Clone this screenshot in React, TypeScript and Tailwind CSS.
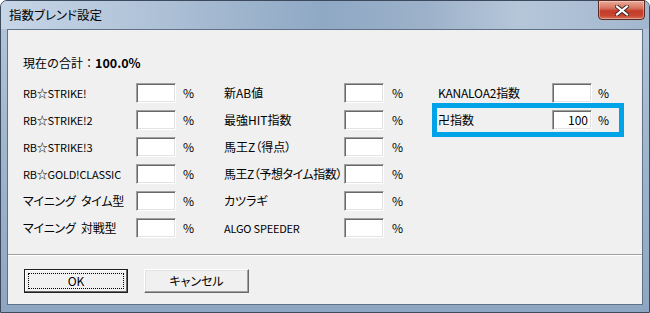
import React from 'react';

type Row = { label: string; value?: string; cls?: string };

const latin = 'text-[11px] tracking-[-0.2px]';

const col1: Row[] = [
  { label: 'RB☆STRIKE!', cls: latin },
  { label: 'RB☆STRIKE!2', cls: latin },
  { label: 'RB☆STRIKE!3', cls: latin },
  { label: 'RB☆GOLD!CLASSIC', cls: latin },
  { label: 'マイニング\u2002タイム型', cls: 'tracking-[-0.3px]' },
  { label: 'マイニング\u2002対戦型', cls: 'tracking-[-0.3px]' },
];

const col2: Row[] = [
  { label: '新AB値' },
  { label: '最強HIT指数' },
  { label: '馬王Z（得点）' },
  { label: '馬王Z（予想タイム指数）', cls: 'tracking-[-0.45px]' },
  { label: 'カツラギ' },
  { label: 'ALGO SPEEDER', cls: latin },
];

const col3: Row[] = [
  { label: 'KANALOA2指数', cls: 'tracking-[-0.2px]' },
  { label: '卍指数', value: '100' },
];

function Field({ row, labelW, gap }: { row: Row; labelW: string; gap: string }) {
  return (
    <div className="flex items-center h-[20px]">
      <span className={`${labelW} whitespace-pre leading-none ${row.cls ?? ''}`}>{row.label}</span>
      <div className="w-[40px] h-[20px] bg-white border border-[#a0a0a0] border-b-white border-r-white shadow-[inset_1px_1px_0_#696969,inset_-1px_-1px_0_#e3e3e3] flex items-center justify-end pr-[3px] leading-none">
        {row.value}
      </div>
      <span className={`${gap} leading-none`}>%</span>
    </div>
  );
}

function CloseGlyph() {
  return (
    <svg width="14" height="11" viewBox="0 0 14 11">
      <path d="M2 1.5 L12 9.5 M12 1.5 L2 9.5" stroke="#3a2220" strokeWidth="4" strokeLinecap="square" />
      <path d="M2 1.5 L12 9.5 M12 1.5 L2 9.5" stroke="#ffffff" strokeWidth="2.2" strokeLinecap="square" />
    </svg>
  );
}

export default function App() {
  return (
    <div className="relative w-[650px] h-[313px] border border-[#3b4b5d] rounded-t-[7px] px-[6px] pb-[7px] flex flex-col bg-[linear-gradient(to_bottom,#b4c6da,#a3b8cf_40%,#8ea6c1)] font-['Noto_Sans_CJK_JP',sans-serif] text-[12px] text-black [font-feature-settings:'palt']">
      {/* title bar */}
      <div className="-mx-[6px] h-[28px] flex justify-between pl-[8px] pr-[4px] rounded-t-[6px] bg-[linear-gradient(to_right,#c7d6e7_0%,#b0c3d8_22%,#8fa8c4_50%,#9db2ca_66%,#b5c6d9_80%,#a2b7ce_100%)]">
        <span className="mt-[6px] text-[12.5px] leading-[16px] text-black">指数ブレンド設定</span>
        <div className="w-[47px] h-[20px] -mt-[1px] rounded-b-[4px] border border-[#5b2a24] bg-[linear-gradient(to_bottom,#e8aa98_0%,#d8735f_40%,#c23d2b_55%,#c8452f_80%,#d9735a_100%)] shadow-[inset_0_0_0_1px_rgba(255,255,255,0.35)] flex items-center justify-center">
          <CloseGlyph />
        </div>
      </div>

      {/* client area */}
      <div className="h-[276px] border border-[#5f7186] bg-[#f0f0f0] flex flex-col">
        <div className="h-[224px] pl-[15px] flex flex-col">
          <div className="mt-[25px] h-[16px] flex items-center leading-none">
            <span className="w-[72px] [font-feature-settings:normal]">現在の合計：</span>
            <span className="font-bold text-[12.5px]">100.0%</span>
          </div>
          <div className="mt-[12px] flex">
            <div className="w-[201px] flex flex-col gap-[7px]">
              {col1.map((r) => (
                <Field key={r.label} row={r} labelW="w-[113px]" gap="ml-[7px]" />
              ))}
            </div>
            <div className="w-[214px] flex flex-col gap-[7px]">
              {col2.map((r) => (
                <Field key={r.label} row={r} labelW="w-[120px]" gap="ml-[8px]" />
              ))}
            </div>
            <div className="flex flex-col gap-[7px]">
              {col3.map((r) => (
                <Field key={r.label} row={r} labelW="w-[114px]" gap="ml-[6px]" />
              ))}
            </div>
          </div>
        </div>

        <div className="h-[2px] border-t border-[#a0a0a0] border-b border-b-white" />

        <div className="flex-1 flex gap-[16px] pl-[16px] pt-[13px]">
          <div className="w-[104px] h-[24px] border border-[#1e1e1e] bg-[#f0f0f0] shadow-[inset_-1px_-1px_0_#696969,inset_1px_1px_0_#ffffff] p-[3px]">
            <div className="w-full h-full border border-dotted border-black flex items-center justify-center leading-none">
              OK
            </div>
          </div>
          <div className="w-[105px] h-[24px] border border-white border-b-[#696969] border-r-[#696969] bg-[#f0f0f0] shadow-[inset_-1px_-1px_0_#a0a0a0,inset_1px_1px_0_#e3e3e3] flex items-center justify-center leading-none">
            キャンセル
          </div>
        </div>
      </div>

      {/* annotation highlight */}
      <div className="absolute left-[431px] top-[102px] w-[192px] h-[34px] border-[5px] border-[#00a2e8] pointer-events-none" />
    </div>
  );
}
